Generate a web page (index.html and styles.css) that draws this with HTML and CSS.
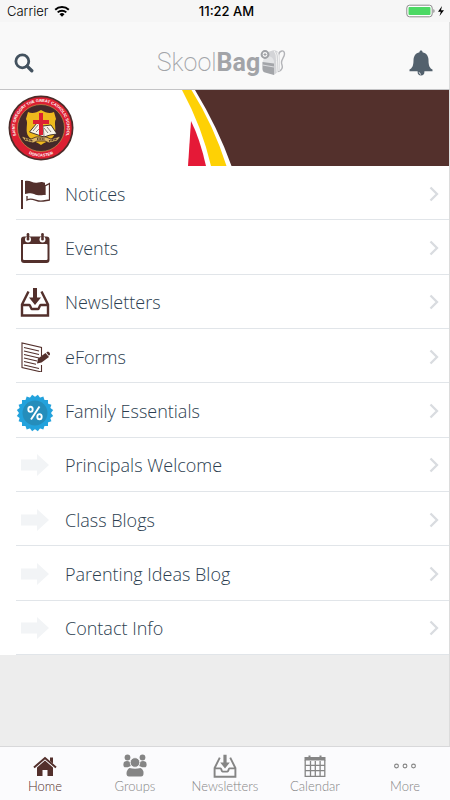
FILE: index.html
```html
<!DOCTYPE html>
<html lang="en">
<head>
  <meta charset="UTF-8">
  <meta name="viewport" content="width=device-width, initial-scale=1.0">
  <title>SkoolBag</title>
  <link rel="stylesheet" href="styles.css">
</head>
<body>
  <!-- Shared icon shapes -->
  <svg class="symbols" aria-hidden="true">
    <symbol id="arrow" viewBox="0 0 30 30">
      <path d="M1 9.500h16V4l12 11-12 11v-5.500H1z" fill="#f2f4f6"/>
    </symbol>
    <symbol id="chevron" viewBox="0 0 10 16">
      <path d="M1.500 1.500L8 8l-6.500 6.500" fill="none" stroke="#d9dce0" stroke-width="2.300"/>
    </symbol>
    <symbol id="inbox" viewBox="0 0 30 30">
      <path d="M8.500 4.500L2 17.500V28.500h26V17.500L21.500 4.500M2 18h7.500c1 0 1.200 4 2.500 4h6c1.300 0 1.500-4 2.500-4H28" fill="none" stroke="currentColor" stroke-width="2.400"/>
      <path d="M13 1h4v9.500h4L15 18 9 10.500h4z" fill="currentColor"/>
    </symbol>
  </svg>

  <div class="status-bar">
    <span class="carrier">
      Carrier
      <svg class="wifi" viewBox="0 0 16 12" aria-hidden="true">
        <g fill="none" stroke="#000" stroke-width="2">
          <path d="M1.200 4.700a9.800 9.800 0 0 1 13.600 0"/>
          <path d="M3.700 7.400a6.200 6.200 0 0 1 8.600 0"/>
        </g>
        <path d="M8 11.800L5.500 9.300a3.600 3.600 0 0 1 5 0z"/>
      </svg>
    </span>
    <span class="time">11:22 AM</span>
    <svg class="battery" viewBox="0 0 40 14" aria-hidden="true">
      <rect x=".8" y="1.200" width="25.400" height="11.600" rx="2.800" fill="#fff" stroke="#8c8c8c"/>
      <rect x="2.500" y="3" width="22" height="8" rx="1" fill="#4cd964"/>
      <path d="M27.300 5c1.800.6 1.800 3.400 0 4z" fill="#8c8c8c"/>
      <path d="M36 2l-4 5.800h2.800L33.500 12l4.500-5.800h-3z"/>
    </svg>
  </div>

  <header class="app-header">
    <button class="icon-button" aria-label="Search">
      <svg class="search" viewBox="0 0 18 18" aria-hidden="true">
        <circle cx="7.500" cy="7.500" r="5.800" fill="none" stroke="#43525f" stroke-width="2.500"/>
        <path d="M11.800 11.800l4.200 4.200" stroke="#43525f" stroke-width="3" stroke-linecap="round"/>
      </svg>
    </button>
    <h1 class="logo">
      <span>Skool<b>Bag</b></span>
      <svg class="backpack" viewBox="0 0 26 27" aria-hidden="true">
        <path d="M18.500 6c1-5 6-5.500 6-1 0 3-3.500 6-3 9 .3 2 1.500 3 .5 5.500S20 22 18 22.500" fill="none" stroke="#b3b4b8" stroke-width="1.400"/>
        <path d="M8 3l6-2q5 1 5.500 5l.5 15-6 5z" fill="#d3d4d7"/>
        <path d="M14 1.500q3 4 2.500 10l.5 12M17 3q2 4 1.500 8l.5 11" stroke="#f2f2f2" fill="none"/>
        <path d="M2.500 14C3 6 13.500 5 14 13v12.500L5 23c-2-.6-2.500-2-2.500-4z" fill="#e3e4e6"/>
        <path d="M2.500 13l11.500 1.500v11.500L5 23.500c-2-.6-2.500-2-2.500-4z" fill="#a3a5a9"/>
        <path d="M2.500 16l11.500 2" stroke="#dcdde0" fill="none"/>
        <circle cx="5" cy="5.500" r="3.400" fill="#f9f9f9" stroke="#a0a2a6" stroke-width="2"/>
        <path d="M5 4v3M3.500 5.500h3" stroke="#a0a2a6"/>
      </svg>
    </h1>
    <button class="icon-button" aria-label="Notifications">
      <svg class="bell" viewBox="0 0 24 26" aria-hidden="true">
        <path d="M12 .5c1 0 1.500.7 1.500 1.700 4 .8 6 4 6 8 0 6 1.500 8 4 9.300v1.800H.5v-1.800c2.500-1.300 4-3.300 4-9.300 0-4 2-7.200 6-8C10.500 1.200 11 .5 12 .5z" fill="#53616d"/>
        <path d="M8.600 21h6.800v1a3.400 3.400 0 0 1-6.800 0z" fill="#53616d"/>
        <path d="M10.200 22.300c.2 1.200.9 1.800 1.800 2" fill="none" stroke="#fff" stroke-width=".9"/>
      </svg>
    </button>
  </header>

  <main>
    <div class="banner">
      <svg class="crest" viewBox="0 0 66 66" role="img" aria-label="Saint Gregory the Great Catholic School, Doncaster">
        <defs>
          <path id="ring-top" d="M11.500 47.500a26 26 0 1 1 43 0"/>
          <path id="ring-bottom" d="M13 53.500a29 29 0 0 0 40 0"/>
        </defs>
        <circle cx="33" cy="33" r="32.500" fill="#4b2c29"/>
        <circle cx="33" cy="33" r="30.800" fill="#dc1f32"/>
        <circle cx="33" cy="33" r="23.500" fill="#44292a" stroke="#c8a34a" stroke-width=".6"/>
        <text class="crest-text"><textPath href="#ring-top" startOffset="50%">SAINT GREGORY THE GREAT CATHOLIC SCHOOL</textPath></text>
        <text class="crest-text"><textPath href="#ring-bottom" startOffset="50%">DONCASTER</textPath></text>
        <path d="M20 17c4 2 8 1 13-2 5 3 9 4 13 2l2 7c-3 4 2 12-3 18-3 4-8 5-12 8-4-3-9-4-12-8-5-6 0-14-3-18z" fill="#eeb91d"/>
        <path d="M21.500 37l7.500-9 6 3 8-1 6 9-7 1-6 2z" fill="#f8f4e8" stroke="#332523" stroke-width=".9"/>
        <path d="M25 36l5-6M28 37l5-5M31 38l4-5M36 33l4 5M39 32l4 5M35 31l1 10" stroke="#6f655e" stroke-width=".8"/>
        <path d="M31 18h4v7h6v4h-6v11h-4V29h-6v-4h6z" fill="#dc1f32"/>
        <path d="M13 41l10 3 5-2h10l5 2 10-3-4 5-8 2-4-2h-8l-4 2-8-2z" fill="#dfb867" stroke="#38221f" stroke-width=".8"/>
        <path d="M17 44l8 2M29 44h8M41 46l8-2" stroke="#38221f" stroke-width="1.600" stroke-dasharray="1 .6"/>
      </svg>
      <!-- Curved stripes that sweep into the brown panel -->
      <svg class="stripes" viewBox="0 0 270 76" preserveAspectRatio="xMinYMin slice" aria-hidden="true">
        <path d="M15 0h255v76H51.500Q38 38 15 0z" fill="#53302c"/>
        <path d="M2 0h9.500Q34 36 46.500 76H31Q22 37 2 0z" fill="#fed105"/>
        <path d="M11 31Q20 49 26 76H8z" fill="#e51937"/>
      </svg>
    </div>

    <ul class="menu">
      <li><a href="#notices">
        <svg class="menu-icon" viewBox="0 0 30 30" aria-hidden="true">
          <path d="M1 1h2v29H1z"/>
          <path d="M5 2c5-1.500 8 3 13 1.500 3-.8 4-.8 7 .2v12c-5 .5-6 1.500-11-.7-4-1.500-6-.2-9 0z"/>
          <path d="M7 17v4c5-3 9 1.500 14 1.200 3-.2 5-.7 8.500-1.200V4.500L25 7v9" fill="none" stroke="currentColor" stroke-width="1.300"/>
        </svg>
        <span>Notices</span>
        <svg class="chevron" aria-hidden="true"><use href="#chevron"/></svg>
      </a></li>
      <li><a href="#events">
        <svg class="menu-icon" viewBox="0 0 30 30" aria-hidden="true">
          <rect x="1" y="3.500" width="28.500" height="26.500" rx="3"/>
          <rect x="3" y="11" width="24.500" height="16" rx="1" fill="#fff"/>
          <circle cx="8" cy="6.500" r="3" fill="#fff"/>
          <circle cx="22.500" cy="6.500" r="3" fill="#fff"/>
          <rect x="6.700" y="0" width="2.600" height="7.500" rx="1.300"/>
          <rect x="21.200" y="0" width="2.600" height="7.500" rx="1.300"/>
        </svg>
        <span>Events</span>
        <svg class="chevron" aria-hidden="true"><use href="#chevron"/></svg>
      </a></li>
      <li><a href="#newsletters">
        <svg class="menu-icon" aria-hidden="true"><use href="#inbox"/></svg>
        <span>Newsletters</span>
        <svg class="chevron" aria-hidden="true"><use href="#chevron"/></svg>
      </a></li>
      <li><a href="#eforms">
        <svg class="menu-icon" viewBox="0 0 30 30" aria-hidden="true">
          <path d="M21.500 14V5.500L2 1v24.500L21.500 30v-7" fill="none" stroke="currentColor" stroke-width="1.100"/>
          <path d="M4 5.500l15 3.500M4 9l15 3.500M4 12.500l15 3.500M4 16l13 3M4 19.500l12 2.800M4 23l15 3.500" stroke="currentColor" stroke-width="1.100"/>
          <path d="M17 21.500l1-5 7.500-5.500 3.500 4-7.500 5.500z"/>
          <path d="M26.300 10.500l1.200-.8c1-.6 3.200 2 2.400 3l-1 1z"/>
        </svg>
        <span>eForms</span>
        <svg class="chevron" aria-hidden="true"><use href="#chevron"/></svg>
      </a></li>
      <li><a href="#family-essentials">
        <svg class="menu-icon offer" viewBox="0 -4 38 42" aria-hidden="true">
          <g fill="#23a2dc">
            <rect x="6" y="6" width="26" height="26"/>
            <rect x="6" y="6" width="26" height="26" transform="rotate(18 19 19)"/>
            <rect x="6" y="6" width="26" height="26" transform="rotate(36 19 19)"/>
            <rect x="6" y="6" width="26" height="26" transform="rotate(54 19 19)"/>
            <rect x="6" y="6" width="26" height="26" transform="rotate(72 19 19)"/>
          </g>
          <circle cx="19" cy="19" r="12.500" fill="#258dbb"/>
          <g fill="none" stroke="#fff" stroke-width="1.900">
            <path d="M23.500 12.500l-8.500 13"/>
            <ellipse cx="14.500" cy="15.300" rx="2.200" ry="2.600"/>
            <ellipse cx="23.500" cy="22.700" rx="2.200" ry="2.600"/>
          </g>
        </svg>
        <span>Family Essentials</span>
        <svg class="chevron" aria-hidden="true"><use href="#chevron"/></svg>
      </a></li>
      <li><a href="#principals-welcome">
        <svg class="menu-icon" aria-hidden="true"><use href="#arrow"/></svg>
        <span>Principals Welcome</span>
        <svg class="chevron" aria-hidden="true"><use href="#chevron"/></svg>
      </a></li>
      <li><a href="#class-blogs">
        <svg class="menu-icon" aria-hidden="true"><use href="#arrow"/></svg>
        <span>Class Blogs</span>
        <svg class="chevron" aria-hidden="true"><use href="#chevron"/></svg>
      </a></li>
      <li><a href="#parenting-ideas">
        <svg class="menu-icon" aria-hidden="true"><use href="#arrow"/></svg>
        <span>Parenting Ideas Blog</span>
        <svg class="chevron" aria-hidden="true"><use href="#chevron"/></svg>
      </a></li>
      <li><a href="#contact">
        <svg class="menu-icon" aria-hidden="true"><use href="#arrow"/></svg>
        <span>Contact Info</span>
        <svg class="chevron" aria-hidden="true"><use href="#chevron"/></svg>
      </a></li>
    </ul>
  </main>

  <nav class="tab-bar" aria-label="Main">
    <a href="#home" class="active" aria-current="page">
      <svg viewBox="0 0 24 24" aria-hidden="true">
        <path d="M12 6.500l8 7V22h-5.500v-6h-5v6H4v-8.500z"/>
        <path d="M1 13.500L12 4l11 9.500" fill="none" stroke="currentColor" stroke-width="2"/>
        <path d="M17 3.500h3v6l-3-2.500z"/>
      </svg>
      Home
    </a>
    <a href="#groups">
      <svg viewBox="0 0 24 24" aria-hidden="true">
        <circle cx="4.500" cy="3.500" r="2.900"/>
        <circle cx="19.500" cy="3.500" r="2.900"/>
        <path d="M1 8q3-2 6 0l.8 4-3 1.200H1.500Q-.5 12 1 8zM23 8q-3-2-6 0l-.8 4 3 1.200h3.300Q24.500 12 23 8z"/>
        <circle cx="12" cy="8.500" r="4.800" stroke="#fbfbfd" stroke-width=".8"/>
        <path d="M6.500 14q5.500 1.500 11 0 3.500 2 3 5.500Q20.500 22.500 18 22.500H6q-2.500 0-2.500-3 0-3.500 3-5.500z"/>
      </svg>
      Groups
    </a>
    <a href="#newsletters">
      <svg aria-hidden="true"><use href="#inbox"/></svg>
      Newsletters
    </a>
    <a href="#calendar">
      <svg viewBox="0 0 24 24" aria-hidden="true">
        <path d="M5.500 1.500h2V3h9V1.500h2V3h4v3.500h-21V3h4z"/>
        <path d="M2.200 6v16.300h19.600V6M2 11.300h20M2 16.700h20M7.500 7v15M12.300 7v15M17.100 7v15" fill="none" stroke="currentColor" stroke-width="1.300"/>
      </svg>
      Calendar
    </a>
    <a href="#more">
      <svg viewBox="0 0 24 24" aria-hidden="true">
        <g fill="none" stroke="currentColor" stroke-width="1.100">
          <circle cx="3.500" cy="12" r="1.900"/>
          <circle cx="12" cy="12" r="1.900"/>
          <circle cx="20.500" cy="12" r="1.900"/>
        </g>
      </svg>
      More
    </a>
  </nav>
</body>
</html>
```
FILE: styles.css
```css
* {
  box-sizing: border-box;
}

body {
  margin: 0;
  min-height: 100vh;
  display: flex;
  flex-direction: column;
  font-family: "Open Sans", sans-serif;
  background-color: #ededed;
  color: #2c3e50;
}

svg {
  display: block;
  flex: none;
}

.symbols {
  position: absolute;
  width: 0;
  height: 0;
}

/* Phone status bar */
.status-bar {
  display: grid;
  grid-template-columns: 1fr auto 1fr;
  align-items: center;
  height: 22px;
  padding: 0 4px 0 7px;
  background-color: #f6f6f6;
  color: #000;
  font-family: Inter, sans-serif;
  font-size: 13px;
  font-weight: 300;
}

.carrier {
  display: flex;
  align-items: center;
  gap: 6px;
}

.wifi {
  width: 16px;
  height: 12px;
}

.time {
  font-weight: 500;
}

.battery {
  width: 40px;
  height: 14px;
  justify-self: end;
}

/* Header with logo */
.app-header {
  display: flex;
  align-items: center;
  justify-content: space-between;
  height: 68px;
  padding: 14px 16px 0 14px;
  background-color: #f9f9f9;
  border-bottom: 1px solid #c4c4c6;
  border-right: 1px solid #dcdcdc;
}

.icon-button {
  padding: 0;
  border: none;
  background: none;
  cursor: pointer;
}

.search {
  width: 20px;
  height: 20px;
}

.bell {
  width: 24px;
  height: 26px;
}

.logo {
  display: flex;
  align-items: center;
  margin: 0;
  color: #a2a4a8;
  font-family: Roboto, sans-serif;
  font-size: 25px;
  font-weight: 200;
  line-height: 30px;
}

.logo b {
  font-weight: 700;
}

.backpack {
  width: 26px;
  height: 27px;
}

main {
  flex: 1;
  border-right: 1px solid #dcdcdc;
}

/* School banner */
.banner {
  display: flex;
  align-items: center;
  justify-content: space-between;
  height: 76px;
  padding-left: 8px;
  background-color: #fff;
}

.crest {
  width: 66px;
  height: 66px;
}

.crest-text {
  fill: #fff;
  font-family: "Liberation Sans", sans-serif;
  font-size: 4px;
  font-weight: 700;
  text-anchor: middle;
}

.stripes {
  width: 61%;
  height: 76px;
}

/* Menu list */
.menu {
  display: grid;
  grid-auto-rows: 1fr;
  min-height: 489px;
  margin: 0;
  padding: 0 0 0 16px;
  list-style: none;
  background-color: #fff;
}

.menu li {
  display: grid;
  border-bottom: 1px solid #e1e5e9;
}

.menu a {
  display: flex;
  align-items: center;
  gap: 15px;
  padding: 2px 10px 0 4px;
  color: inherit;
  font-size: 18px;
  font-weight: 300;
  line-height: 24px;
  text-decoration: none;
}

.menu span {
  flex: 1;
}

.menu-icon {
  width: 30px;
  height: 30px;
  color: #53302c;
  fill: currentColor;
}

.offer {
  width: 38px;
  height: 42px;
  margin: 0 -4px;
}

.chevron {
  width: 10px;
  height: 16px;
}

/* Bottom tabs */
.tab-bar {
  display: grid;
  grid-template-columns: repeat(5, 1fr);
  height: 54px;
  background-color: #fbfbfd;
  border-top: 1px solid #d8d8da;
}

.tab-bar a {
  display: flex;
  flex-direction: column;
  align-items: center;
  padding-top: 7px;
  color: #858585;
  font-family: Lato, sans-serif;
  font-size: 13px;
  font-weight: 300;
  line-height: 16px;
  text-decoration: none;
}

.tab-bar svg {
  width: 24px;
  height: 24px;
  fill: currentColor;
}

.tab-bar .active {
  color: #53302c;
}
```
